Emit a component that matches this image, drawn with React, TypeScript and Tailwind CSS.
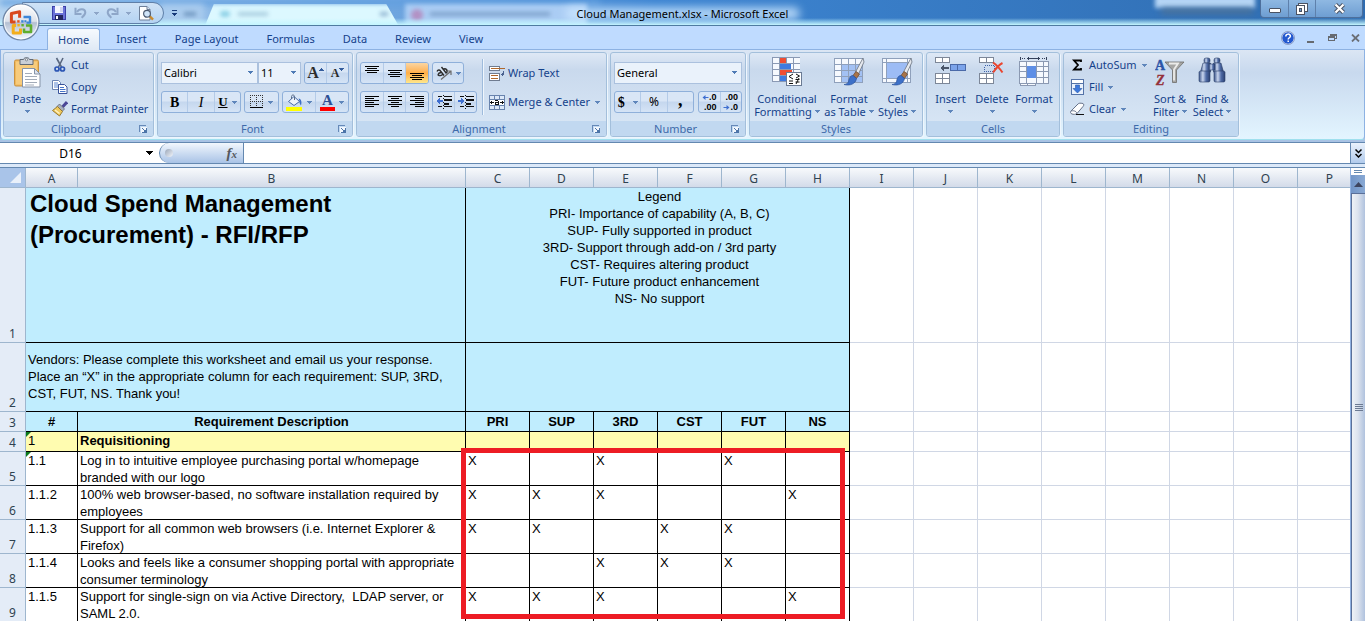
import React from "react";

type Kids = { children?: React.ReactNode };

function Arrow({ className = "" }: { className?: string }) {
  return (
    <svg width="5" height="3" viewBox="0 0 5 3" className={"shrink-0 " + className} shapeRendering="crispEdges" aria-hidden="true">
      <path d="M0 0h5v1H0zM1 1h3v1H1zM2 2h1v1H2z" fill="currentColor" />
    </svg>
  );
}

/* ---------- title bar icons ---------- */

function OfficeLogo() {
  return (
    <svg width="38" height="38" viewBox="0 0 38 38" aria-hidden="true">
      <defs>
        <linearGradient id="orb" x1="0" y1="0" x2="0" y2="1">
          <stop offset="0" stopColor="#ffffff" />
          <stop offset="0.48" stopColor="#dde2eb" />
          <stop offset="0.52" stopColor="#b4bfd1" />
          <stop offset="0.8" stopColor="#dbe3f0" />
          <stop offset="1" stopColor="#f8fbff" />
        </linearGradient>
      </defs>
      <circle cx="19" cy="19" r="18" fill="url(#orb)" stroke="#6f86a6" strokeWidth="1.2" />
      <circle cx="19" cy="19" r="16.6" fill="none" stroke="#fff" strokeWidth="1" opacity="0.8" />
      <g fill="none" strokeWidth="3" strokeLinejoin="round">
        <path d="M13.500 19H9.400V10.500l8.200-1.700v6" stroke="#d9481e" />
        <path d="M21.500 14h6.500v5.600h-3.500" stroke="#3c86d8" strokeWidth="2.400" />
        <path d="M24 22.500h5v6.500h-7v-3.500" stroke="#5fae2e" strokeWidth="2.600" />
        <path d="M14 22.500H11.200v7.500h7.300v-4.500" stroke="#f3ae1c" />
      </g>
      <g>
        <rect x="15.2" y="17.2" width="2.4" height="2.4" fill="#e8541d" />
        <rect x="19.2" y="17.2" width="2.4" height="2.4" fill="#3c86d8" />
        <rect x="22.4" y="17.2" width="2" height="2" fill="#3c86d8" />
        <rect x="15.4" y="21" width="2.4" height="2.4" fill="#f3ae1c" />
        <rect x="19.4" y="21" width="2.4" height="2.4" fill="#5fae2e" />
      </g>
    </svg>
  );
}

function SaveIcon() {
  return (
    <svg width="14" height="14" viewBox="0 0 14 14" shapeRendering="crispEdges" aria-hidden="true">
      <rect x="0" y="0" width="14" height="14" fill="#3b3fa8" />
      <rect x="1" y="1" width="12" height="12" fill="#6a72d8" />
      <rect x="3" y="0" width="8" height="7" fill="#f4f6ff" />
      <rect x="8" y="1" width="3" height="5" fill="#cfd4f2" />
      <rect x="3" y="9" width="8" height="5" fill="#22265e" />
      <rect x="4" y="10" width="2" height="3" fill="#fff" />
    </svg>
  );
}

function UndoIcon({ flip = false }: { flip?: boolean }) {
  return (
    <svg width="13" height="12" viewBox="0 0 13 12" aria-hidden="true">
      <g transform={flip ? "translate(13 0) scale(-1 1)" : undefined} stroke="#8ea6c8" fill="none">
        <path d="M1.5 0.8v6.2h6" strokeWidth="2" />
        <path d="M3 5C5 1.5 11 1 11.3 5.2 11.3 7.6 9.6 9 7.6 10.8" strokeWidth="2" />
      </g>
    </svg>
  );
}

function PreviewIcon() {
  return (
    <svg width="15" height="15" viewBox="0 0 15 15" aria-hidden="true">
      <path d="M0.5 0.5h7.5l3 3v10.5H0.5z" fill="#fff" stroke="#6d7f99" />
      <path d="M8 0.5v3h3" fill="#dfe6f0" stroke="#6d7f99" />
      <path d="M10.5 10l3.5 3.6" stroke="#c98a2c" strokeWidth="2.4" />
      <circle cx="8" cy="7.8" r="3.4" fill="#cfe4f8" stroke="#4d5c72" strokeWidth="1.2" />
    </svg>
  );
}

/* ---------- ribbon icons ---------- */

function PasteIcon() {
  return (
    <svg width="27" height="31" viewBox="0 0 27 31" aria-hidden="true">
      <rect x="0.5" y="3" width="24" height="26" rx="1.5" fill="#f0b95c" stroke="#c99242" />
      <rect x="2" y="4.5" width="21" height="23" fill="#f7cb7c" />
      <path d="M6 2.5h3.5C10 0 15 0 15.500 2.500H19v5H6z" fill="#c9ced6" stroke="#626a76" />
      <circle cx="12.500" cy="2.800" r="1.100" fill="#fff" stroke="#626a76" strokeWidth="0.700" />
      <path d="M8.500 11.500h12l5.500 5.500v13h-17.500z" fill="#fff" stroke="#8593a8" />
      <path d="M20.500 11.500v5.500H26z" fill="#dfe5ee" stroke="#8593a8" />
      <path d="M11 16.500h7M11 19.500h12M11 22.500h12M11 25.500h12M11 28h9" stroke="#a3acb9" />
    </svg>
  );
}
function CutIcon() {
  return (
    <svg width="16" height="16" viewBox="0 0 16 16" aria-hidden="true">
      <path d="M4.500 1l5 9M11 1L6.500 10" stroke="#5a6880" strokeWidth="1.600" fill="none" />
      <circle cx="5" cy="12" r="2" fill="none" stroke="#2c56b4" strokeWidth="1.700" />
      <circle cx="10.500" cy="12" r="2" fill="none" stroke="#2c56b4" strokeWidth="1.700" />
    </svg>
  );
}
function CopyIcon() {
  return (
    <svg width="16" height="16" viewBox="0 0 16 16" aria-hidden="true">
      <path d="M0.500 1.500h6l2 2v7h-8z" fill="#fff" stroke="#6a84b4" />
      <path d="M2 4h4M2 6h5M2 8h5" stroke="#5b86d0" />
      <path d="M6.500 5.500h6l2.500 2.500v6.500H6.500z" fill="#fff" stroke="#38529a" />
      <path d="M8 8.500h4M8 10.500h5.500M8 12.500h5.500" stroke="#4674c8" />
    </svg>
  );
}
function PainterIcon() {
  return (
    <svg width="16" height="16" viewBox="0 0 16 16" aria-hidden="true">
      <path d="M15 1l-4.500 5" stroke="#4b4796" strokeWidth="3" />
      <path d="M7.500 3l5 5-2.500 2.500-5-5z" fill="#a9b0bc" stroke="#5f6672" strokeWidth="0.800" />
      <path d="M5.500 5.500l5 5L7.500 15 0.500 9.500z" fill="#efc95e" stroke="#8f7026" strokeWidth="0.900" />
      <path d="M3 9l4.500 3.500" stroke="#fff3c4" strokeWidth="1.400" />
    </svg>
  );
}
function Lines({ widths, align, top }: { widths: number[]; align: "l" | "c" | "r"; top: number }) {
  return (
    <svg width="14" height="14" viewBox="0 0 14 14" shapeRendering="crispEdges" aria-hidden="true">
      {widths.map((w, i) => (
        <rect key={i} x={align === "l" ? 0 : align === "c" ? (14 - w) / 2 : 14 - w} y={top + i * 2} width={w} height="1" fill="#000" />
      ))}
    </svg>
  );
}
function OrientationIcon() {
  return (
    <svg width="16" height="14" viewBox="0 0 16 14" aria-hidden="true">
      <g fill="none" stroke="#2c2c2c" strokeWidth="1.400">
        <path d="M1 5.500c1-2 2.500-2 3.500-.5l3.500 4.500M3.500 9.500C1.500 10 1.500 7 5 6.500M3.500 9.500c1.500.5 3-.5 3.500-2" />
        <path d="M5.500 1l5 6.500M7.500 3.500c1.500-2 5 .5 3 3.500" />
      </g>
      <path d="M5 13.500L14.500 5.500M15 9V5h-4" fill="none" stroke="#6b6b6b" strokeWidth="1.200" />
    </svg>
  );
}
function IndentIcon({ right = false }: { right?: boolean }) {
  return (
    <svg width="16" height="14" viewBox="0 0 16 14" shapeRendering="crispEdges" aria-hidden="true">
      <path d="M2 1h4v1H2zM8 1h8v1H8zM7 0h1v1H7zM8 4h8v2H8zM8 8h5v2H8zM2 11h4v1H2zM8 11h8v1H8zM7 3h1v1H7zM7 7h1v1H7zM7 10h1v1H7zM7 13h1v1H7z" fill="#111" />
      <path d={right ? "M0 5h3V3l4 3-4 3V7H0z" : "M7 5H4V3L0 6l4 3V7h3z"} fill="#3f6fd0" />
    </svg>
  );
}
function WrapIcon() {
  return (
    <svg width="16" height="15" viewBox="0 0 16 15" shapeRendering="crispEdges" aria-hidden="true">
      <rect x="0.500" y="0.500" width="10" height="4" fill="#fff" stroke="#6f7c90" />
      <path d="M2 2h14v1H2z" fill="#b0682c" />
      <rect x="0.500" y="7.500" width="10" height="7" fill="#fff" stroke="#6f7c90" />
      <path d="M2 9h7v1H2zM2 12h7v1H2z" fill="#b0682c" />
      <path d="M14 5h1v4h-1zM12 8h2v1h-2zM13 7h1v3h-1z" fill="#49618f" />
    </svg>
  );
}
function MergeIcon() {
  return (
    <svg width="16" height="15" viewBox="0 0 16 15" shapeRendering="crispEdges" aria-hidden="true">
      <rect x="0" y="0" width="16" height="15" fill="#6883ad" />
      <path d="M1 1h4v3H1zM6 1h4v3H6zM11 1h4v3h-4zM1 11h4v3H1zM6 11h4v3H6zM11 11h4v3h-4z" fill="#dce8f8" />
      <rect x="1" y="5" width="14" height="5" fill="#fff" />
      <path d="M1 7h4v1H1zM2 6h1v3H2zM11 7h4v1h-4zM13 6h1v3h-1zM6 5h3v1H6zM9 6h1v4H9zM6 7h3v1H6zM6 8h1v2H6zM7 9h2v1H7z" fill="#111" />
    </svg>
  );
}
function BordersIcon() {
  return (
    <svg width="14" height="14" viewBox="0 0 14 14" shapeRendering="crispEdges" aria-hidden="true">
      <path d="M0.500 0v12M6.500 0v12M12.500 0v12M0 0.500h13M0 6.500h13" stroke="#333" strokeDasharray="1 1" fill="none" />
      <rect x="0" y="12" width="13" height="1" fill="#000" />
    </svg>
  );
}
function FillColorIcon() {
  return (
    <svg width="17" height="17" viewBox="0 0 17 17" aria-hidden="true">
      <rect x="0" y="13" width="16" height="4" fill="#ffff00" />
      <path d="M8 2.500l5.500 5-5.500 4L2.500 7.500z" fill="#eef3fb" stroke="#4a6ca8" />
      <path d="M5.500 5V2.500c0-2 3-2 3 0V6" fill="none" stroke="#5a6c88" />
      <path d="M12.500 4.500c3 .5 3.500 3.500 2.500 7-1-1.500-2-3-1.500-4.500z" fill="#3d6fc4" />
    </svg>
  );
}
function DialogIcon() {
  return (
    <svg width="9" height="9" viewBox="0 0 9 9" shapeRendering="crispEdges" aria-hidden="true">
      <path d="M0 0h7v1H1v6H0z" fill="#6689b8" />
      <path d="M2 2h6v6H2z" fill="#f2f7fd" />
      <path d="M3 3h1v1H3zM4 4h1v1H4zM7 3h1v5H3V7h2V5h2z" fill="#4c74a8" />
    </svg>
  );
}
function ConditionalIcon() {
  return (
    <svg width="31" height="30" viewBox="0 0 31 30" shapeRendering="crispEdges" aria-hidden="true">
      <rect x="0" y="0" width="28" height="25" fill="#8a99b4" />
      {[1, 7, 13, 19].map((y) => [1, 8, 15, 22].map((x) => <rect key={x + "-" + y} x={x} y={y} width="6" height="5" fill="#f6f9fe" />))}
      <rect x="8" y="1" width="6" height="5" fill="#ef4d33" />
      <rect x="8" y="7" width="11" height="5" fill="#3f7be0" />
      <rect x="8" y="13" width="12" height="5" fill="#ef4d33" />
      <rect x="8" y="19" width="6" height="5" fill="#3f7be0" />
      <rect x="14.500" y="15.500" width="15" height="13" fill="#fff" stroke="#6b7b94" />
      <g fill="none" stroke="#111" shapeRendering="auto">
        <path d="M21 17l-4 2.500 4 2.500M17 24h4M17 26.500h4" />
        <path d="M24 17l3.500 2-3.500 2M23.500 22.500h4M23.500 25h4M27 21l-3 6" />
      </g>
    </svg>
  );
}
function Brush() {
  return (
    <g>
      <path d="M29 1l-7.500 14 3 2L30 5z" fill="#e5e8ee" stroke="#6a727f" strokeWidth="0.800" />
      <path d="M22 14.500l-3 4 3.500 3 3-4.500z" fill="#a8744a" stroke="#6b4729" strokeWidth="0.700" />
      <path d="M19 18.500c-3 0-4 3-4.500 6.500-1.500 2-3 2.500-4.500 2.500 6 1.500 11.500-.5 12.500-6z" fill="#3d70c8" stroke="#2a519c" strokeWidth="0.700" />
    </g>
  );
}
function TableStyleIcon() {
  return (
    <svg width="31" height="30" viewBox="0 0 31 30" aria-hidden="true">
      <rect x="0" y="1" width="29" height="25" fill="#8fa0bb" shapeRendering="crispEdges" />
      {[2, 8, 14, 20].map((y) =>
        [1, 8, 15, 22].map((x) => (
          <rect key={x + "-" + y} x={x} y={y} width="6" height="5" fill={x > 1 && y > 2 ? "#a3c1f4" : "#f6f9fe"} shapeRendering="crispEdges" />
        ))
      )}
      <Brush />
    </svg>
  );
}
function CellStyleIcon() {
  return (
    <svg width="31" height="30" viewBox="0 0 31 30" aria-hidden="true">
      <g shapeRendering="crispEdges">
        <rect x="0" y="1" width="29" height="25" fill="#8fa0bb" />
        <rect x="1" y="2" width="27" height="23" fill="#f6f9fe" />
        <path d="M4 1v25M25 1v25M0 5.500h29M0 21.500h29" stroke="#8fa0bb" />
        <rect x="5" y="6" width="20" height="15" fill="#9dbcf5" />
      </g>
      <Brush />
    </svg>
  );
}
function InsertIcon() {
  return (
    <svg width="31" height="28" viewBox="0 0 31 28" shapeRendering="crispEdges" aria-hidden="true">
      {[0, 16, 21].map((y) => [0, 7].map((x) => <rect key={x + "-" + y} x={x + 0.5} y={y + 0.5} width="7" height="5" fill="#fff" stroke="#7d8798" />))}
      <rect x="15.500" y="7.500" width="15" height="6" fill="#7ba3ea" stroke="#4a69a8" />
      <path d="M22.500 7v7" stroke="#4a69a8" />
      <path d="M14 10H9V8l-4 3 4 3v-2h5z" fill="#4b566a" />
    </svg>
  );
}
function DeleteIcon() {
  return (
    <svg width="26" height="28" viewBox="0 0 26 28" aria-hidden="true">
      <g shapeRendering="crispEdges">
        {[0, 16, 21].map((y) => [0, 7].map((x) => <rect key={x + "-" + y} x={x + 0.5} y={y + 0.5} width="7" height="5" fill="#fff" stroke="#7d8798" />))}
        <rect x="5.500" y="8.500" width="10" height="6" fill="none" stroke="#3f62a8" strokeDasharray="1 1" />
      </g>
      <path d="M14 5.500c3 2 6 5 9.500 10M23.500 6c-4 2-7 6-9.500 9.500" fill="none" stroke="#ea4630" strokeWidth="2" />
    </svg>
  );
}
function FormatIcon() {
  return (
    <svg width="30" height="30" viewBox="0 0 30 30" shapeRendering="crispEdges" aria-hidden="true">
      <path d="M1 0h1v3H1zM27 0h1v3h-1zM3 1h1v1H3zM5 1h1v1H5zM8 1h13v1H8zM23 1h1v1h-1zM25 1h1v1h-1zM9 0h1v3H9zM19 0h1v3h-1z" fill="#35415a" />
      <rect x="0" y="4" width="30" height="23" fill="#8b99b2" />
      {[5, 10, 15, 21].map((y) => [1, 8, 18, 25].map((x) => <rect key={x + "-" + y} x={x} y={y} width={x === 8 ? 9 : x === 25 ? 4 : 6} height={y < 15 ? 4 : 5} fill="#f6f9fe" />))}
      <rect x="8" y="9" width="9" height="12" fill="#5d8ee6" />
      <rect x="1.500" y="26.500" width="7" height="2" fill="#f6f9fe" stroke="#8b99b2" />
      <rect x="8.500" y="26.500" width="8" height="2" fill="#f6f9fe" stroke="#8b99b2" />
    </svg>
  );
}
function SigmaIcon() {
  return (
    <svg width="14" height="16" viewBox="0 0 14 16" aria-hidden="true">
      <path d="M10 5V3.500H3L7 8l-4 4.500h7V11" fill="none" stroke="#000" strokeWidth="1.800" />
    </svg>
  );
}
function FillIcon() {
  return (
    <svg width="16" height="16" viewBox="0 0 16 16" aria-hidden="true">
      <rect x="1.500" y="0.500" width="12" height="15" fill="#e9f1fc" stroke="#5473a8" />
      <rect x="2" y="1" width="11" height="3" fill="#fff" />
      <path d="M2 4.500h11" stroke="#5473a8" />
      <path d="M5.500 6h4v3.500h2.500L7.500 14 3 9.500h2.500z" fill="#3c78dc" stroke="#2655a8" strokeWidth="0.600" />
    </svg>
  );
}
function EraserIcon() {
  return (
    <svg width="16" height="14" viewBox="0 0 16 14" aria-hidden="true">
      <path d="M1 9l7-7c1-1 2-1 5-.5 1 .5 1 2 0 3l-6 7c-1 1-4 1-5 .5-1.500-.5-2-2-1-3z" fill="#fff" stroke="#66728a" />
      <path d="M1 9c2-.5 5-.5 6 2.500" fill="none" stroke="#66728a" />
      <path d="M6 12.500h8" stroke="#111" strokeWidth="1.200" />
    </svg>
  );
}
function SortIcon() {
  return (
    <svg width="30" height="32" viewBox="0 0 30 32" aria-hidden="true">
      <path d="M10 5h19l-7.500 8v12.500h-4V13z" fill="#a6a6a4" stroke="#6c6c6a" strokeWidth="0.800" />
      <path d="M14 6.500h9l-4 6v11" fill="none" stroke="#ececea" strokeWidth="1.800" />
      <text x="0" y="12.5" fontFamily="Liberation Serif, serif" fontWeight="bold" fontSize="14" fill="#2c55a8" stroke="#2c55a8" strokeWidth="0.4">A</text>
      <text x="1" y="28" fontFamily="Liberation Serif, serif" fontWeight="bold" fontStyle="italic" fontSize="14" fill="#94303a" stroke="#94303a" strokeWidth="0.4">Z</text>
    </svg>
  );
}
function BinocularsIcon() {
  return (
    <svg width="28" height="26" viewBox="0 0 28 26" aria-hidden="true">
      <defs>
        <linearGradient id="lens" x1="0" x2="1">
          <stop offset="0" stopColor="#3a548a" />
          <stop offset="0.350" stopColor="#c9d6ee" />
          <stop offset="0.650" stopColor="#4f6ba6" />
          <stop offset="1" stopColor="#2b4172" />
        </linearGradient>
      </defs>
      <g fill="url(#lens)" stroke="#2b3f6a" strokeWidth="0.600">
        <rect x="6" y="1" width="6" height="5" rx="2" />
        <rect x="16" y="1" width="6" height="5" rx="2" />
        <path d="M5 6h7.500v9H2.500z" />
        <path d="M15.500 6H23l2.500 9h-10z" />
        <rect x="11" y="7" width="6" height="6" />
        <rect x="1" y="14" width="11" height="11" rx="1.500" />
        <rect x="16" y="14" width="11" height="11" rx="1.500" />
      </g>
    </svg>
  );
}

/* ---------- ribbon building blocks ---------- */

function Group({ title, width, launcher = false, children }: Kids & { title: string; width: string; launcher?: boolean }) {
  return (
    <section
      aria-label={title}
      className={
        "flex shrink-0 flex-col overflow-hidden rounded-[3px] border border-[#a3bfdb] bg-linear-to-b from-[#dee8f5] from-0% via-[#c9d9ed] via-20% to-[#dae8f6] shadow-[1px_1px_0_#eef6fd] " +
        width
      }
    >
      <div className="flex h-[68px] shrink-0 px-[3px]">{children}</div>
      <div className="flex flex-1 items-center bg-[#c1d8f0] pr-[5px] text-[#3e6aaa]">
        <span className="flex-1 pl-[9px] text-center leading-4">{title}</span>
        {launcher ? (
          <button aria-label={title + " options"}>
            <DialogIcon />
          </button>
        ) : (
          <span className="w-1" />
        )}
      </div>
    </section>
  );
}

function Big({ icon, lines, width, inline = true }: { icon: React.ReactNode; lines: string[]; width: string; inline?: boolean }) {
  return (
    <button className={"flex shrink-0 flex-col items-center whitespace-nowrap pt-1 leading-[13px] " + width}>
      <span className="flex h-[35px] items-start justify-center">{icon}</span>
      <span>{lines[0]}</span>
      {inline ? (
        <span className="flex items-center gap-[3px]">
          {lines[1]}
          <Arrow className="text-[#5f86bb]" />
        </span>
      ) : (
        <span className="flex h-3 items-center">
          <Arrow className="text-[#5f86bb]" />
        </span>
      )}
    </button>
  );
}

function Small({ icon, label, arrow = false }: { icon: React.ReactNode; label: string; arrow?: boolean }) {
  return (
    <button className="flex h-[22px] items-center gap-[3px] whitespace-nowrap">
      <span className="flex w-4 justify-center">{icon}</span>
      <span>{label}</span>
      {arrow && <Arrow className="ml-[2px] text-[#5f86bb]" />}
    </button>
  );
}

function Bar({ children, width }: Kids & { width: string }) {
  return (
    <div className={"flex h-[22px] divide-x divide-[#b4cbe8] overflow-hidden rounded-[3px] border border-[#8fb0da] bg-linear-to-b from-[#d9e6f6] from-45% via-[#c5d7ee] via-50% to-[#d5e4f6] " + width}>
      {children}
    </div>
  );
}

function Tool({ label, children, on = false, arrow = false }: Kids & { label: string; on?: boolean; arrow?: boolean }) {
  return (
    <button
      aria-label={label}
      aria-pressed={on}
      className={"flex flex-1 items-center justify-center gap-1 text-black " + (on ? "bg-linear-to-b from-[#fbd5a0] via-[#ffae45] via-50% to-[#ffe78b]" : "")}
    >
      {children}
      {arrow && <Arrow className="text-[#5f86bb]" />}
    </button>
  );
}

function Combo({ label, value, width }: { label: string; value: string; width: string }) {
  return (
    <div className={"relative h-[22px] text-black " + width}>
      <select aria-label={label} defaultValue={value} className="h-full w-full appearance-none border border-[#abc1de] bg-[#eaf2fb] pl-[2px] outline-none">
        <option>{value}</option>
      </select>
      <Arrow className="pointer-events-none absolute top-[9px] right-[5px] text-[#4f7bb5]" />
    </div>
  );
}

/* ---------- worksheet data ---------- */

const columns = ["A", "B", "C", "D", "E", "F", "G", "H", "I", "J", "K", "L", "M", "N", "O", "P"];
const blanks = ["I", "J", "K", "L", "M", "N", "O", "P"];
const marks = ["PRI", "SUP", "3RD", "CST", "FUT", "NS"];
const legend = [
  "Legend",
  "PRI- Importance of capability (A, B, C)",
  "SUP- Fully supported in product",
  "3RD- Support through add-on / 3rd party",
  "CST- Requires altering product",
  "FUT- Future product enhancement",
  "NS- No support",
];
const requirements = [
  { n: 5, id: "1.1", text: "Log in to intuitive employee purchasing portal w/homepage\nbranded with our logo", x: ["PRI", "3RD", "FUT"] },
  { n: 6, id: "1.1.2", text: "100% web browser-based, no software installation required by\nemployees", x: ["PRI", "SUP", "3RD", "NS"] },
  { n: 7, id: "1.1.3", text: "Support for all common web browsers (i.e. Internet Explorer &\nFirefox)", x: ["PRI", "SUP", "CST", "FUT"] },
  { n: 8, id: "1.1.4", text: "Looks and feels like a consumer shopping portal with appropriate\nconsumer terminology", x: ["3RD", "CST", "FUT"] },
  { n: 9, id: "1.1.5", text: "Support for single-sign on via Active Directory,  LDAP server, or\nSAML 2.0.", x: ["PRI", "SUP", "3RD", "NS"] },
];

const ink = "border-r border-b border-black p-0 ";

function RowHead({ n }: { n: number }) {
  return (
    <th scope="row" className="border-r border-b border-[#9eb6ce] bg-[#e4ecf7] p-0 text-center align-bottom font-[Noto_Sans,sans-serif] text-[12px] leading-4 font-normal text-[#2f4250]">
      {n}
    </th>
  );
}
function Blanks() {
  return (
    <>
      {blanks.map((c) => (
        <td key={c} className="border-r border-b border-[#d0d7e5] bg-white p-0" />
      ))}
    </>
  );
}
function Flag() {
  return <span className="absolute top-0 left-0 h-[5px] w-[5px] bg-[#0b7a1b] [clip-path:polygon(0_0,100%_0,0_100%)]" />;
}

function Sheet() {
  return (
    <table className="w-full min-w-[1362px] table-fixed border-separate border-spacing-0 text-[13px] leading-[17px] text-black">
      <colgroup>
        <col className="w-[26px]" />
        <col className="w-[52px]" />
        <col className="w-[388px]" />
        {columns.slice(2, 15).map((c) => (
          <col key={c} className="w-16" />
        ))}
        <col />
      </colgroup>
      <thead>
        <tr className="h-5">
          <th className="border-r border-b border-[#9eb6ce] bg-[#a9c4e9] p-0">
            <button aria-label="Select all" className="flex h-[19px] w-full items-end justify-end p-1">
              <span className="h-[11px] w-[11px] bg-[#e9f0fa] [clip-path:polygon(100%_0,100%_100%,0_100%)]" />
            </button>
          </th>
          {columns.map((c) => (
            <th key={c} scope="col" className="border-r border-b border-[#9eb6ce] bg-linear-to-b from-[#f8fafc] to-[#d3dbe9] p-0 pt-[2px] font-[Noto_Sans,sans-serif] text-[12px] font-normal text-[#2f4250]">
              {c}
            </th>
          ))}
        </tr>
      </thead>
      <tbody>
        <tr className="h-[155px]">
          <RowHead n={1} />
          <td colSpan={2} className={ink + "bg-[#c0edfe] pl-1 align-top text-[24px] leading-[31px] font-bold"}>
            Cloud Spend Management
            <br />
            (Procurement) - RFI/RFP
          </td>
          <td colSpan={6} className={ink + "bg-[#c0edfe] pl-1 text-center align-top"}>
            {legend.map((l) => (
              <div key={l}>{l}</div>
            ))}
          </td>
          <Blanks />
        </tr>
        <tr className="h-[69px]">
          <RowHead n={2} />
          <td colSpan={2} className={ink + "bg-[#c0edfe] pb-[2px] pl-[2px] align-middle"}>
            Vendors: Please complete this worksheet and email us your response.
            <br />
            Place an “X” in the appropriate column for each requirement: SUP, 3RD,
            <br />
            CST, FUT, NS. Thank you!
          </td>
          <td colSpan={6} className={ink + "bg-[#c0edfe]"} />
          <Blanks />
        </tr>
        <tr className="h-5 text-center font-bold">
          <RowHead n={3} />
          <td className={ink + "bg-[#c0edfe]"}>#</td>
          <td className={ink + "bg-[#c0edfe]"}>Requirement Description</td>
          {marks.map((m) => (
            <td key={m} className={ink + "bg-[#c0edfe]"}>
              {m}
            </td>
          ))}
          <Blanks />
        </tr>
        <tr className="h-5">
          <RowHead n={4} />
          <td className={ink + "relative bg-[#fffcb0] pl-[2px] align-top"}>
            <Flag />1
          </td>
          <td className={ink + "bg-[#fffcb0] pl-[2px] align-top font-bold"}>Requisitioning</td>
          {marks.map((m) => (
            <td key={m} className={ink + "bg-[#fffcb0]"} />
          ))}
          <Blanks />
        </tr>
        {requirements.map((r) => (
          <tr key={r.n} className="h-[34px]">
            <RowHead n={r.n} />
            <td className={ink + "relative bg-white pl-[2px] align-top"}>
              {r.n === 5 && <Flag />}
              {r.id}
            </td>
            <td className={ink + "bg-white pl-[2px] align-top"}>
              <div className="h-[33px] overflow-hidden whitespace-pre">{r.text}</div>
            </td>
            {marks.map((m) => (
              <td key={m} className={ink + "bg-white pl-[2px] align-top"}>
                {r.x.includes(m) ? "X" : ""}
              </td>
            ))}
            <Blanks />
          </tr>
        ))}
      </tbody>
    </table>
  );
}

/* ---------- window chrome ---------- */

function TitleBar() {
  return (
    <header className="relative flex h-[26px] shrink-0 overflow-hidden border-b border-[#4f7ba0] bg-linear-to-r from-[#b4d3f0] from-0% via-[#3d85d2] via-48% to-[#2f6cb0]">
      <div className="absolute inset-0">
        <div className="absolute top-0 left-0 h-[5px] w-[600px] bg-[#5f9fe0] blur-[3px]" />
        <div className="absolute top-1 left-[160px] h-6 w-[44px] bg-[#a9cbee] blur-[3px]" />
        <div className="absolute top-1 left-[204px] h-6 w-[196px] bg-[#dcf8ff] blur-[2px] [clip-path:polygon(5%_0,93%_0,100%_100%,0_100%)]" />
        <div className="absolute top-1 left-[405px] h-6 w-[182px] bg-[#abcdf4] blur-[2px]" />
        <div className="absolute top-[11px] left-[220px] h-[6px] w-[10px] rounded-full bg-[#8bd0e6] blur-[2px]" />
        <div className="absolute top-3 left-[238px] h-1 w-[30px] bg-[#a8cddf] blur-[2px]" />
        <div className="absolute top-3 left-[380px] h-1 w-2 bg-[#90b3d0] blur-[2px]" />
        <div className="absolute top-[9px] left-[411px] h-3 w-3 rounded-full bg-[#b291c4] blur-[2px]" />
        <div className="absolute top-3 left-[430px] h-1 w-[120px] bg-[#7ea2cb] blur-[2px]" />
        <div className="absolute top-3 left-[184px] h-1 w-3 bg-[#6d95bd] blur-[2px]" />
        <div className="absolute -top-1 right-[110px] h-3 w-[100px] bg-[#b6d6f6] blur-[2px]" />
        <div className="absolute top-2 right-[112px] h-[6px] w-[92px] bg-[#4c7299] blur-[3px]" />
        <div className="absolute inset-x-0 bottom-0 h-[7px] bg-linear-to-b from-transparent to-[#c4f6ff]" />
      </div>
      <div className="relative mt-[2px] ml-[22px] flex h-[22px] w-[142px] items-center rounded-r-full border border-[#5f7fa8] bg-linear-to-b from-[#cfe2f6] to-[#b4d3f2] pl-[29px]">
        <button aria-label="Save">
          <SaveIcon />
        </button>
        <button aria-label="Undo" className="ml-2 flex items-center gap-[7px] text-[#8ea6c8]">
          <UndoIcon />
          <Arrow />
        </button>
        <button aria-label="Redo" className="ml-[7px] flex items-center gap-[7px] text-[#8ea6c8]">
          <UndoIcon flip />
          <Arrow />
        </button>
        <button aria-label="Print preview" className="ml-2">
          <PreviewIcon />
        </button>
      </div>
      <button aria-label="Customize toolbar" className="relative ml-2 flex flex-col items-center justify-center gap-[2px] text-[#173a7a]">
        <span className="h-px w-[5px] bg-[#173a7a]" />
        <Arrow />
      </button>
      <div className="pointer-events-none absolute inset-x-0 top-[5px] flex justify-center">
        <div className="relative px-3">
          <span className="absolute inset-x-0 inset-y-[2px] rounded-full bg-[#cbe6ff]/80 blur-[4px]" />
          <h1 className="relative text-[11px] leading-[17px] text-black">Cloud Management.xlsx - Microsoft Excel</h1>
        </div>
      </div>
      <div className="relative mr-[2px] ml-auto flex h-[18px] divide-x divide-[#5e80ab] rounded-b-[4px] border border-t-0 border-[#4d6f9c] bg-linear-to-b from-[#8fb8e2] to-[#6e9ed2]">
        <button aria-label="Minimize" className="flex w-7 items-center justify-center pt-1">
          <span className="h-[5px] w-3 rounded-[1px] border border-[#4a5262] bg-white" />
        </button>
        <button aria-label="Restore" className="flex w-[27px] items-center justify-center">
          <svg width="12" height="12" viewBox="0 0 12 12" shapeRendering="crispEdges" aria-hidden="true">
            <path d="M2.500 0.500h9v8h-9z" fill="#fff" stroke="#4a5262" />
            <path d="M0.500 2.500h8v9h-8z" fill="#fff" stroke="#4a5262" />
            <path d="M3.500 5.500h2v3h-2z" fill="#6e9ed2" stroke="#4a5262" />
          </svg>
        </button>
        <button aria-label="Close" className="flex w-[46px] items-center justify-center">
          <svg width="13" height="11" viewBox="0 0 13 11" aria-hidden="true">
            <path d="M2.500 1.500l8 8M10.500 1.500l-8 8" stroke="#4a5262" strokeWidth="4.200" />
            <path d="M2.500 1.500l8 8M10.500 1.500l-8 8" stroke="#fff" strokeWidth="2.200" />
          </svg>
        </button>
      </div>
    </header>
  );
}

function Tabs() {
  const tabs = ["Home", "Insert", "Page Layout", "Formulas", "Data", "Review", "View"];
  return (
    <nav className="flex h-6 shrink-0 items-end gap-1 border-b border-[#8db2e3] bg-[#bfdbff] pl-[47px] text-[#15428b]">
      {tabs.map((t, i) => (
        <button
          key={t}
          className={
            "h-[22px] pt-[2px] " +
            (i === 0 ? "-mb-px rounded-t-[3px] border border-b-0 border-[#8db2e3] bg-linear-to-b from-[#f6fafe] to-[#dfe9f5] px-[10px]" : "px-3")
          }
        >
          {t}
        </button>
      ))}
      <div className="ml-auto flex h-full items-center gap-3 pr-[5px]">
        <button aria-label="Help">
          <svg width="14" height="14" viewBox="0 0 14 14" aria-hidden="true">
            <circle cx="7" cy="7" r="6.300" fill="#2459cf" stroke="#fff" />
            <circle cx="7" cy="7" r="6.600" fill="none" stroke="#6b82b4" strokeWidth="0.700" />
            <path d="M4.800 5.400c0-3 4.600-3 4.600-.2 0 1.600-2.200 1.500-2.200 3.300M7.200 9.500v1.500" fill="none" stroke="#fff" strokeWidth="1.500" />
          </svg>
        </button>
        <button aria-label="Minimize workbook" className="flex h-[10px] w-[7px] items-end">
          <span className="h-[2px] w-full bg-[#666a70]" />
        </button>
        <button aria-label="Restore workbook" className="ml-[2px]">
          <svg width="9" height="7" viewBox="0 0 9 7" shapeRendering="crispEdges" aria-hidden="true">
            <path d="M2 0h7v5H7V4h1V2H2z" fill="#666a70" />
            <path d="M0 2h7v5H0zM1 4v2h5V4z" fill="#666a70" fillRule="evenodd" />
          </svg>
        </button>
        <button aria-label="Close workbook" className="ml-[2px]">
          <svg width="9" height="8" viewBox="0 0 9 8" aria-hidden="true">
            <path d="M1 0.500l7 7M8 0.500l-7 7" stroke="#6b6f76" strokeWidth="1.800" />
          </svg>
        </button>
      </div>
    </nav>
  );
}

function Ribbon() {
  const serif = "font-[Liberation_Serif,serif] font-bold ";
  return (
    <div className="flex h-[90px] shrink-0 gap-[3px] overflow-hidden rounded-b-[4px] border-x border-b border-x-[#8db2e3] border-b-[#9fe0ee] bg-linear-to-b from-[#dbe6f4] via-[#c8d9ee] via-25% to-[#e3f5ff] px-[2px] pt-[2px] pb-[2px] text-[#15428b]">
      <Group title="Clipboard" width="w-[151px]" launcher>
        <Big icon={<PasteIcon />} lines={["Paste"]} width="w-[40px]" inline={false} />
        <div className="ml-[5px] flex flex-col pt-[1px]">
          <Small icon={<CutIcon />} label="Cut" />
          <Small icon={<CopyIcon />} label="Copy" />
          <Small icon={<PainterIcon />} label="Format Painter" />
        </div>
      </Group>

      <Group title="Font" width="w-[196px]" launcher>
        <div className="flex flex-col gap-[7px] pt-[9px]">
          <div className="flex">
            <Combo label="Font" value="Calibri" width="w-[97px]" />
            <Combo label="Font size" value="11" width="w-[43px]" />
            <div className="ml-[3px]">
              <Bar width="w-[45px]">
                <Tool label="Grow font">
                  <span className={serif + "text-[16px] text-[#2c2c2c]"}>A</span>
                  <Arrow className="-mt-2 -ml-1 rotate-180 text-[#345d9d]" />
                </Tool>
                <Tool label="Shrink font">
                  <span className={serif + "text-[12px] text-[#2c2c2c]"}>A</span>
                  <Arrow className="-mt-2 -ml-1 text-[#345d9d]" />
                </Tool>
              </Bar>
            </div>
          </div>
          <div className="flex gap-[3px]">
            <Bar width="w-20">
              <Tool label="Bold">
                <span className={serif + "text-[14px]"}>B</span>
              </Tool>
              <Tool label="Italic">
                <span className="font-[Liberation_Serif,serif] text-[14px] italic">I</span>
              </Tool>
              <Tool label="Underline" arrow>
                <span className={serif + "text-[13px] underline"}>U</span>
              </Tool>
            </Bar>
            <Bar width="w-[35px]">
              <Tool label="Borders" arrow>
                <BordersIcon />
              </Tool>
            </Bar>
            <Bar width="w-[67px]">
              <Tool label="Fill color" arrow>
                <FillColorIcon />
              </Tool>
              <Tool label="Font color" arrow>
                <span className={serif + "border-b-4 border-[#ff0000] px-[2px] text-[15px] leading-[13px] text-[#2c4f94]"}>A</span>
              </Tool>
            </Bar>
          </div>
        </div>
      </Group>

      <Group title="Alignment" width="w-[251px]" launcher>
        <div className="flex flex-col gap-[7px] pt-[9px]">
          <div className="flex gap-[3px]">
            <Bar width="w-[69px]">
              <Tool label="Top align">
                <Lines widths={[14, 10, 14, 10]} align="c" top={0} />
              </Tool>
              <Tool label="Middle align">
                <Lines widths={[14, 10, 14, 10]} align="c" top={4} />
              </Tool>
              <Tool label="Bottom align" on>
                <Lines widths={[14, 10, 14, 10]} align="c" top={7} />
              </Tool>
            </Bar>
            <Bar width="w-8">
              <Tool label="Orientation" arrow>
                <OrientationIcon />
              </Tool>
            </Bar>
          </div>
          <div className="flex gap-[3px]">
            <Bar width="w-[69px]">
              <Tool label="Align left">
                <Lines widths={[14, 9, 14, 9, 14, 9]} align="l" top={1} />
              </Tool>
              <Tool label="Center">
                <Lines widths={[14, 8, 14, 8, 14, 8]} align="c" top={1} />
              </Tool>
              <Tool label="Align right">
                <Lines widths={[14, 9, 14, 9, 14, 9]} align="r" top={1} />
              </Tool>
            </Bar>
            <Bar width="w-[45px]">
              <Tool label="Decrease indent">
                <IndentIcon />
              </Tool>
              <Tool label="Increase indent">
                <IndentIcon right />
              </Tool>
            </Bar>
          </div>
        </div>
        <div className="mx-[5px] my-[6px] w-[2px] border-l border-[#9ebbdc] bg-[#eff6fd]" />
        <div className="flex flex-col gap-[7px] pt-[9px]">
          <Small icon={<WrapIcon />} label="Wrap Text" />
          <Small icon={<MergeIcon />} label="Merge & Center" arrow />
        </div>
      </Group>

      <Group title="Number" width="w-[136px]" launcher>
        <div className="flex flex-col gap-[7px] pt-[9px]">
          <Combo label="Number format" value="General" width="w-32" />
          <div className="flex gap-1">
            <Bar width="w-20">
              <Tool label="Accounting format" arrow>
                <span className={serif + "pr-1 text-[14px]"}>$</span>
              </Tool>
              <Tool label="Percent">
                <span className="text-[12px]">%</span>
              </Tool>
              <Tool label="Comma style">
                <span className={serif + "pb-1 text-[18px] leading-4"}>,</span>
              </Tool>
            </Bar>
            <Bar width="w-[44px]">
              <Tool label="Increase decimal">
                <span className="flex flex-col items-end font-[Liberation_Sans,sans-serif] text-[9px] leading-[10px] font-bold">
                  <span className="flex items-center">
                    <svg width="7" height="5" viewBox="0 0 6 5" aria-hidden="true"><path d="M6 2H3V0L0 2.500 3 5V3h3z" fill="#3f6fd0" /></svg>
                    .0
                  </span>
                  .00
                </span>
              </Tool>
              <Tool label="Decrease decimal">
                <span className="flex flex-col items-end font-[Liberation_Sans,sans-serif] text-[9px] leading-[10px] font-bold">
                  .00
                  <span className="flex items-center">
                    <svg width="7" height="5" viewBox="0 0 6 5" aria-hidden="true"><path d="M0 2h3V0l3 2.500L3 5V3H0z" fill="#3f6fd0" /></svg>
                    .0
                  </span>
                </span>
              </Tool>
            </Bar>
          </div>
        </div>
      </Group>

      <Group title="Styles" width="w-[174px]">
        <Big icon={<ConditionalIcon />} lines={["Conditional", "Formatting"]} width="w-[68px]" />
        <Big icon={<TableStyleIcon />} lines={["Format", "as Table"]} width="w-[56px]" />
        <Big icon={<CellStyleIcon />} lines={["Cell", "Styles"]} width="w-[40px]" />
      </Group>

      <Group title="Cells" width="w-[134px]">
        <Big icon={<InsertIcon />} lines={["Insert"]} width="w-[41px]" inline={false} />
        <Big icon={<DeleteIcon />} lines={["Delete"]} width="w-[42px]" inline={false} />
        <Big icon={<FormatIcon />} lines={["Format"]} width="w-[42px]" inline={false} />
      </Group>

      <Group title="Editing" width="w-[176px]">
        <div className="ml-[3px] flex w-[79px] flex-col pt-[1px]">
          <Small icon={<SigmaIcon />} label="AutoSum" arrow />
          <Small icon={<FillIcon />} label="Fill" arrow />
          <Small icon={<EraserIcon />} label="Clear" arrow />
        </div>
        <Big icon={<SortIcon />} lines={["Sort &", "Filter"]} width="w-[42px]" />
        <Big icon={<BinocularsIcon />} lines={["Find &", "Select"]} width="w-[42px]" />
      </Group>
    </div>
  );
}

function FormulaBar() {
  return (
    <div className="flex h-[22px] shrink-0 border-y border-[#6488b0] bg-white">
      <div className="flex w-[159px] items-center bg-white">
        <input aria-label="Name box" defaultValue="D16" className="w-[141px] min-w-0 pt-[2px] text-center text-[12px] text-black outline-none" />
        <button aria-label="Named ranges" className="pl-[5px] text-black">
          <svg width="7" height="4" viewBox="0 0 7 4" shapeRendering="crispEdges" aria-hidden="true">
            <path d="M0 0h7v1H0zM1 1h5v1H1zM2 2h3v1H2zM3 3h1v1H3z" fill="currentColor" />
          </svg>
        </button>
      </div>
      <div className="flex w-[85px] items-center justify-between rounded-l-full border-x border-[#6488b0] bg-linear-to-b from-[#f2f7fd] to-[#a9c3e6] pr-[6px] pl-[5px]">
        <span className="h-2 w-2 rounded-full bg-linear-to-br from-[#9aa6b8] to-[#f3f6fb]" />
        <button aria-label="Insert function" className="font-[Liberation_Serif,serif] text-[15px] leading-4 font-bold text-[#55585e] italic">
          f<span className="text-[11px]">x</span>
        </button>
      </div>
      <input aria-label="Formula" className="min-w-0 flex-1 bg-white px-1 outline-none" />
      <button aria-label="Expand formula bar" className="flex w-[15px] items-center justify-center border-l border-[#6488b0] bg-linear-to-b from-[#eaf2fc] to-[#b2cbec]">
        <svg width="7" height="9" viewBox="0 0 7 9" aria-hidden="true">
          <path d="M0.500 0.500l3 3 3-3M0.500 5l3 3 3-3" fill="none" stroke="#000" strokeWidth="1.500" />
        </svg>
      </button>
    </div>
  );
}

function ScrollBar() {
  return (
    <div className="flex w-[15px] shrink-0 flex-col border-l border-[#8fb0e0] bg-[#7f9dc8]">
      <div className="flex h-[7px] items-center justify-center bg-white">
        <span className="h-[3px] w-2 border-y border-[#6488b0]" />
      </div>
      <button aria-label="Scroll up" className="flex h-[18px] items-center justify-center bg-linear-to-r from-[#7195c8] to-[#89a9d4]">
        <svg width="9" height="5" viewBox="0 0 9 5" aria-hidden="true">
          <path d="M4.500 0L9 5H0z" fill="#3d4560" />
        </svg>
      </button>
      <div className="flex flex-1 flex-col items-center justify-center border-t border-l border-[#5a7099] bg-linear-to-r from-[#eef2f6] via-[#dce3ee] via-45% to-[#b0c2de]">
        <svg width="8" height="7" viewBox="0 0 8 7" shapeRendering="crispEdges" aria-hidden="true">
          <path d="M0 0h8v1H0zM0 2h8v1H0zM0 4h8v1H0zM0 6h8v1H0z" fill="#6c7a92" />
        </svg>
      </div>
    </div>
  );
}

export default function App() {
  return (
    <div className="flex h-screen flex-col overflow-hidden bg-[#a9c3e4] font-[Noto_Sans,sans-serif] text-[11px]">
      <div className="relative shrink-0">
        <TitleBar />
        <Tabs />
        <button aria-label="Office menu" className="absolute top-[3px] left-[2px]">
          <OfficeLogo />
        </button>
      </div>
      <Ribbon />
      <div className="mt-[2px] flex shrink-0 flex-col">
        <FormulaBar />
      </div>
      <div className="h-1 shrink-0 border-b border-[#6488b0] bg-[#dce9f9]" />
      <main className="flex min-h-0 flex-1 overflow-hidden">
        <div className="relative min-w-0 flex-1 overflow-hidden bg-white font-[Liberation_Sans,Arial,sans-serif]">
          <Sheet />
          <div className="pointer-events-none absolute top-[280px] left-[461px] h-[171px] w-[384px] border-[5px] border-[#ed1c24]" />
        </div>
        <ScrollBar />
      </main>
    </div>
  );
}
